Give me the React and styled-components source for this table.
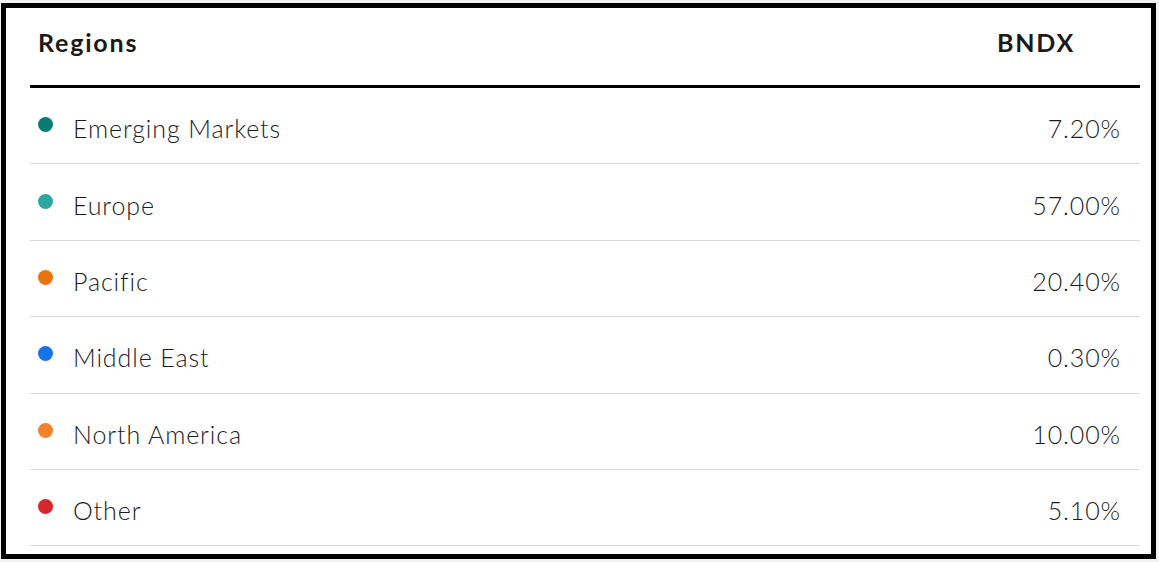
import React from "react";
import styled, { createGlobalStyle } from "styled-components";

const GlobalStyle = createGlobalStyle`
  html, body {
    margin: 0;
    padding: 0;
    background: #f2f2f2;
  }
  body {
    padding: 3px 0 0 1px;
    font-family: Lato, "Liberation Sans", Arial, sans-serif;
  }
`;

const Frame = styled.div`
  box-sizing: border-box;
  width: 1155px;
  height: 556px;
  border: 5px solid #000;
  background: #fff;
  padding: 0 11px 0 24px;
`;

const Table = styled.div`
  display: flex;
  flex-direction: column;
`;

const HeaderRow = styled.div`
  display: flex;
  justify-content: space-between;
  align-items: flex-start;
  height: 80px;
  box-sizing: border-box;
  padding: 19px 65px 0 8px;
  border-bottom: 3px solid #000;
  font-weight: 700;
  font-size: 25px;
  letter-spacing: 1.8px;
  color: #1a1a1a;
`;

const Row = styled.div`
  display: flex;
  align-items: center;
  height: 76.4px;
  box-sizing: border-box;
  border-bottom: 1px solid #d9d9d9;
  padding: 0 19px 0 8px;
`;

const Dot = styled.span`
  width: 15px;
  height: 15px;
  border-radius: 50%;
  background: ${(p) => p.color};
  flex: none;
  margin-top: -2px;
`;

const Label = styled.span`
  flex: 1;
  margin-left: 20px;
  padding-top: 5px;
  font-size: 25px;
  font-weight: 300;
  color: #1c1c1c;
  letter-spacing: 0.9px;
`;

const Value = styled.span`
  padding-top: 5px;
  font-size: 25px;
  font-weight: 300;
  color: #1c1c1c;
  letter-spacing: 0.9px;
`;

const regions = [
  { name: "Emerging Markets", value: "7.20%", color: "#0b7a72" },
  { name: "Europe", value: "57.00%", color: "#2aa79e" },
  { name: "Pacific", value: "20.40%", color: "#ea730f" },
  { name: "Middle East", value: "0.30%", color: "#1673e6" },
  { name: "North America", value: "10.00%", color: "#f2812c" },
  { name: "Other", value: "5.10%", color: "#d8262f" },
];

const App = () => {
  return (
    <React.Fragment>
      <GlobalStyle />
      <Frame>
        <Table>
          <HeaderRow>
            <span>Regions</span>
            <span>BNDX</span>
          </HeaderRow>
          {regions.map((r) => (
            <Row key={r.name}>
              <Dot color={r.color} />
              <Label>{r.name}</Label>
              <Value>{r.value}</Value>
            </Row>
          ))}
        </Table>
      </Frame>
    </React.Fragment>
  );
};

export default App;
